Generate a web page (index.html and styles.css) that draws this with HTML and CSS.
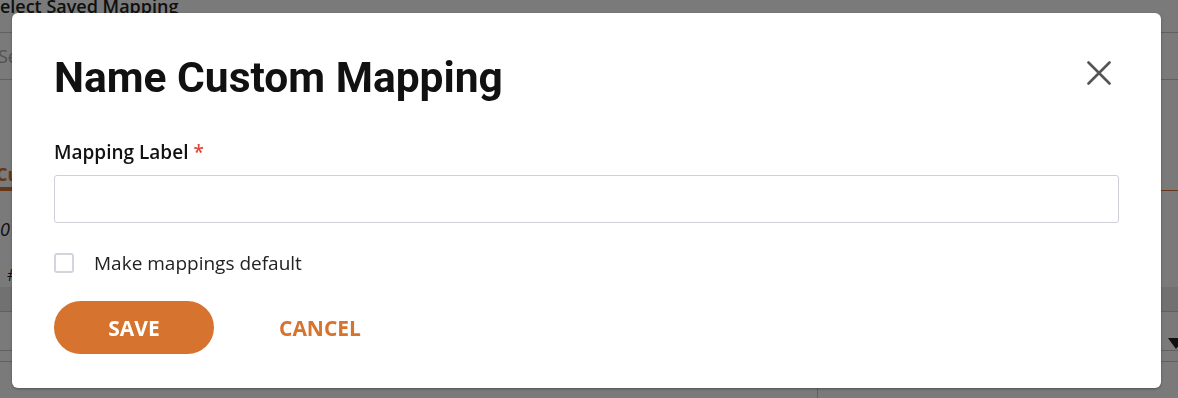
FILE: index.html
```
<!DOCTYPE html>
<html lang="en">
<head>
<meta charset="UTF-8">
<meta name="viewport" content="width=device-width, initial-scale=1.0">
<title>Name Custom Mapping</title>
<link rel="stylesheet" href="styles.css">
</head>
<body>

<!-- page behind the dialog -->
<div class="page">
<h3 class="page-title">Select Saved Mapping</h3>
<div class="saved-select">Select...</div>
<div class="tabs">
<span class="tab active">Custom Mapping</span>
</div>
<p class="count">0 columns mapped</p>
<div class="table-head">#</div>
<div class="table-band"></div>
<div class="table-row">
<span class="dot">.</span>
<span class="caret"></span>
</div>
<div class="table-row small"></div>
<div class="table-foot">
<span class="cell"></span>
</div>
</div>

<div class="overlay"></div>

<!-- The Modal -->
<div class="modal">
<div class="modal-header">
<h1>Name Custom Mapping</h1>
<button class="close" aria-label="Close">
<svg width="24" height="24" viewBox="0 0 24 24">
<path d="M1.5 1.5 L22.5 22.5 M22.5 1.5 L1.5 22.5" stroke="#555" stroke-width="2.6" stroke-linecap="round" fill="none"/>
</svg>
</button>
</div>

<label class="field-label" for="mapping-label">Mapping Label <span class="req">*</span></label>
<input class="text-input" id="mapping-label" type="text">

<label class="check-row">
<span class="check"></span>
Make mappings default
</label>

<div class="actions">
<button class="btn-save">SAVE</button>
<button class="btn-cancel">CANCEL</button>
</div>
</div>

</body>
</html>
```

FILE: styles.css
```
body {
margin: 0;
padding: 0;
background: #fff;
font-family: "Open Sans", sans-serif;
color: #222;
overflow: hidden;
height: 398px;
}

/* background page */
.page {
margin-left: -10px;
}

.page-title {
margin: 0;
margin-top: -7px;
font-size: 18px;
font-weight: 600;
line-height: 26px;
}

.saved-select {
margin-top: 13px;
height: 46px;
border-top: 1px solid #c8c8c8;
border-bottom: 1px solid #c8c8c8;
color: #aaa;
font-size: 18px;
line-height: 46px;
padding-left: 8px;
}

.tabs {
margin-top: 81px;
height: 29px;
border-bottom: 1px solid #d6732f;
}

.tab {
display: inline-block;
height: 26px;
line-height: 26px;
border-bottom: 3px solid #d6732f;
color: #d6732f;
font-weight: 700;
font-size: 18px;
padding-left: 6px;
}

.count {
margin: 25px 0 0;
font-style: italic;
font-size: 18px;
line-height: 26px;
padding-left: 10px;
}

.table-head {
margin-top: 21px;
height: 24px;
line-height: 24px;
font-size: 16px;
padding-left: 17px;
}

.table-band {
height: 24px;
background: #ededed;
border-bottom: 1px solid #c8c8c8;
}

.table-row {
display: flex;
justify-content: space-between;
align-items: flex-end;
height: 38px;
border-bottom: 1px solid #c8c8c8;
}

.dot {
padding-left: 40px;
line-height: 20px;
margin-bottom: 20px;
}

.caret {
width: 0;
height: 0;
border-left: 8px solid transparent;
border-right: 8px solid transparent;
border-top: 11px solid #222;
margin-right: -6px;
margin-bottom: 1px;
}

.table-row.small {
height: 10px;
}

.table-foot {
display: flex;
height: 40px;
border-bottom: 1px solid #c8c8c8;
}

.cell {
flex: none;
width: 827px;
border-right: 1px solid #c8c8c8;
}

.overlay {
position: fixed;
inset: 0;
background: rgba(0, 0, 0, 0.52);
}

/* dialog */
.modal {
position: fixed;
left: 12px;
top: 13px;
width: 1149px;
height: 375px;
box-sizing: border-box;
padding: 41px 42px 34px;
background: #fff;
border-radius: 6px;
box-shadow: 0 1px 3px rgba(0, 0, 0, 0.35);
}

.modal-header {
display: flex;
justify-content: space-between;
align-items: flex-start;
}

h1 {
margin: 0;
font-family: Roboto, sans-serif;
font-weight: 700;
font-size: 42.5px;
line-height: 48px;
color: #111;
}

.close {
border: 0;
padding: 8px;
margin-top: -1px;
background: transparent;
cursor: pointer;
display: flex;
}

.field-label {
display: block;
margin-top: 37px;
font-size: 19px;
font-weight: 600;
line-height: 26px;
color: #111;
}

.req {
color: #e0453a;
}

.text-input {
display: block;
box-sizing: border-box;
width: 100%;
height: 48px;
margin-top: 10px;
border: 1px solid #cfcfd8;
border-radius: 3px;
font-family: inherit;
font-size: 16px;
padding: 0 12px;
}

.check-row {
display: flex;
align-items: center;
gap: 20px;
margin-top: 27px;
font-size: 19px;
line-height: 26px;
color: #222;
}

.check {
width: 20px;
height: 20px;
box-sizing: border-box;
border: 2px solid #d4d4dc;
border-radius: 3px;
}

.actions {
display: flex;
align-items: center;
gap: 33px;
margin-top: 25px;
}

.btn-save,
.btn-cancel {
font-family: "Open Sans", sans-serif;
font-weight: 700;
font-size: 21px;
border: 0;
cursor: pointer;
}

.btn-save {
width: 160px;
height: 53px;
border-radius: 27px;
background: #d6732f;
color: #fff;
}

.btn-cancel {
background: transparent;
color: #d6732f;
padding: 0 32px;
}
```
